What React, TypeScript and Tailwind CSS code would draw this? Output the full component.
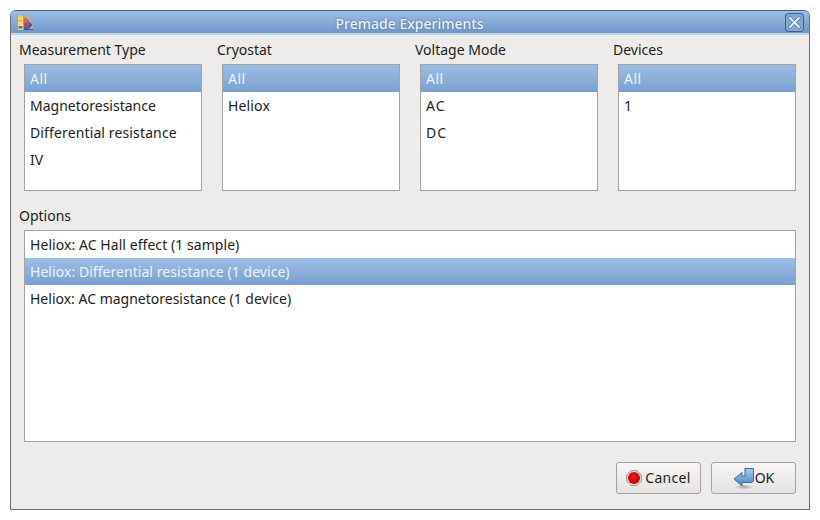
const font = "font-['Noto_Sans',sans-serif] [font-variant-ligatures:none]";

type Item = { t: string; c?: string };

function ListBox({ items, selected, className }: { items: Item[]; selected: number; className: string }) {
  return (
    <div className={`border border-[#a5a29d] bg-white ${className}`}>
      {items.map((it, i) => (
        <div
          key={it.t}
          className={`h-[27px] pl-[5px] leading-[27px] whitespace-nowrap ${it.c ?? ""} ${
            i === selected
              ? "bg-gradient-to-b from-[#9dbde4] to-[#7ba0d0] text-[#eef3fa]"
              : "text-[#1c1c1c]"
          }`}
        >
          {it.t}
        </div>
      ))}
    </div>
  );
}

const ALL: Item = { t: "All", c: "tracking-[0.5px]" };

function Column({ label, items }: { label: string; items: Item[] }) {
  return (
    <div className="w-[198px] shrink-0 flex flex-col">
      <div className="h-[19px] leading-[19px] text-[#1c1c1c]">{label}</div>
      <ListBox items={items} selected={0} className="ml-[5px] mt-[5px] w-[178px] h-[127px]" />
    </div>
  );
}

function AppIcon() {
  return (
    <svg width="17" height="17" viewBox="0 0 17 17">
      <path d="M6 3 L11 3 L16.5 10 L16.5 16 L6 16Z" fill="#b7b0a8" />
      <rect x="0.5" y="1" width="6" height="15" fill="#eee6b8" stroke="#8a8670" strokeWidth="0.6" />
      <rect x="1.5" y="2" width="4" height="2.5" fill="#f4d62e" />
      <rect x="1.5" y="5.5" width="4" height="2.5" fill="#f0c11c" />
      <rect x="1.5" y="9" width="4" height="2" fill="#e9d873" />
      <rect x="1.5" y="12" width="4" height="2.5" fill="#6d6a5c" />
      <path d="M7 4 L10 4 L10.5 8 L7 9Z" fill="#e0642c" />
      <path d="M7 9 L10.5 8 L11 12 L7 13Z" fill="#c63f5a" />
      <path d="M10 5 L13 8 L11 12Z" fill="#8a4fa8" />
      <path d="M11 12 L13 8 L15.5 11 L12 15Z" fill="#5a4f9c" />
      <path d="M7 13 L11 12 L12 15 L7 15Z" fill="#3c5f9e" />
      <rect x="7" y="15" width="9.5" height="1" fill="#57534f" />
    </svg>
  );
}

function CancelIcon() {
  return (
    <svg width="16" height="16" viewBox="0 0 16 16">
      <defs>
        <radialGradient id="r" cx="0.45" cy="0.4" r="0.65">
          <stop offset="0" stopColor="#f41818" />
          <stop offset="1" stopColor="#b80000" />
        </radialGradient>
      </defs>
      <path d="M5 0.7 H11 L15.3 5 V11 L11 15.3 H5 L0.7 11 V5Z" fill="#e4e4e2" stroke="#8f8f8c" strokeWidth="1" />
      <circle cx="8" cy="8" r="6" fill="url(#r)" />
    </svg>
  );
}

function OkIcon() {
  return (
    <svg width="22" height="24" viewBox="0 0 22 24">
      <defs>
        <linearGradient id="a" x1="0" y1="0" x2="0" y2="1">
          <stop offset="0" stopColor="#a9c8ea" />
          <stop offset="1" stopColor="#4a85c4" />
        </linearGradient>
        <radialGradient id="s" cx="0.5" cy="0.5" r="0.5">
          <stop offset="0" stopColor="#777" stopOpacity="0.6" />
          <stop offset="1" stopColor="#777" stopOpacity="0" />
        </radialGradient>
      </defs>
      <ellipse cx="11" cy="21" rx="9" ry="2.5" fill="url(#s)" />
      <path
        d="M12 2.5 H20.5 V14 Q20.5 16.5 18 16.5 H9 V20 L1 13 L9 6.5 V10 H12Z"
        fill="url(#a)"
        stroke="#3f6c9f"
        strokeWidth="1"
        strokeLinejoin="round"
      />
    </svg>
  );
}

export default function App() {
  return (
    <div className={`w-[820px] h-[520px] bg-white pt-[10px] pl-[10px] ${font} text-[14px]`}>
      <div className="w-[800px] h-[500px] border border-[#6e6d6a] border-t-[#3f608c] rounded-t-[6px] bg-[#edecea] flex flex-col overflow-hidden">
        <div className="h-[24px] shrink-0 bg-gradient-to-b from-[#9dbde4] to-[#7097cb] border-b-2 border-b-[#c0d4ee] flex items-center justify-between pl-[6px] pr-[5px]">
          <AppIcon />
          <span className="text-[14px] font-medium text-[#eef3fa] [text-shadow:0_0_2px_#3f608c] pt-[2px]">Premade Experiments</span>
          <div className="w-[19px] h-[19px] rounded-[3px] border border-[#3f608c] bg-[#86a7d3] flex items-center justify-center">
            <svg width="13" height="13" viewBox="0 0 13 13">
              <path d="M2 2 L11 11 M11 2 L2 11" stroke="#4f76a8" strokeWidth="3.4" strokeLinecap="round" />
              <path d="M2 2 L11 11 M11 2 L2 11" stroke="#e8eff8" strokeWidth="2" strokeLinecap="round" />
            </svg>
          </div>
        </div>
        <div className="flex-1 pl-[8px] pt-[5px] flex flex-col">
          <div className="flex">
            <Column
              label="Measurement Type"
              items={[ALL, { t: "Magnetoresistance" }, { t: "Differential resistance", c: "tracking-[0.13px]" }, { t: "IV" }]}
            />
            <Column label="Cryostat" items={[ALL, { t: "Heliox", c: "tracking-[0.15px]" }]} />
            <Column
              label="Voltage Mode"
              items={[ALL, { t: "AC", c: "tracking-[1px]" }, { t: "DC", c: "tracking-[1px]" }]}
            />
            <Column label="Devices" items={[ALL, { t: "1" }]} />
          </div>
          <div className="mt-[15px] h-[19px] leading-[19px] text-[#1c1c1c]">Options</div>
          <ListBox
            items={[
              { t: "Heliox: AC Hall effect (1 sample)", c: "tracking-[0.06px]" },
              { t: "Heliox: Differential resistance (1 device)", c: "tracking-[0.05px]" },
              { t: "Heliox: AC magnetoresistance (1 device)" },
            ]}
            selected={1}
            className="ml-[5px] mt-[5px] w-[772px] h-[212px]"
          />
          <div className="ml-[5px] mt-[20px] w-[772px] flex justify-end gap-[10px]">
            <button className="w-[85px] h-[32px] rounded-[3px] border border-[#a5a29d] bg-gradient-to-b from-[#f7f6f5] to-[#e4e3e1] flex items-center justify-center gap-[3px] text-[#1c1c1c]">
              <CancelIcon />
              <span className="tracking-[0.3px] mb-[2px]">Cancel</span>
            </button>
            <button className="w-[85px] h-[32px] rounded-[3px] border border-[#a5a29d] bg-gradient-to-b from-[#f7f6f5] to-[#e4e3e1] flex items-center justify-center text-[#1c1c1c]">
              <OkIcon />
              <span className="mb-[2px]">OK</span>
            </button>
          </div>
        </div>
      </div>
    </div>
  );
}
